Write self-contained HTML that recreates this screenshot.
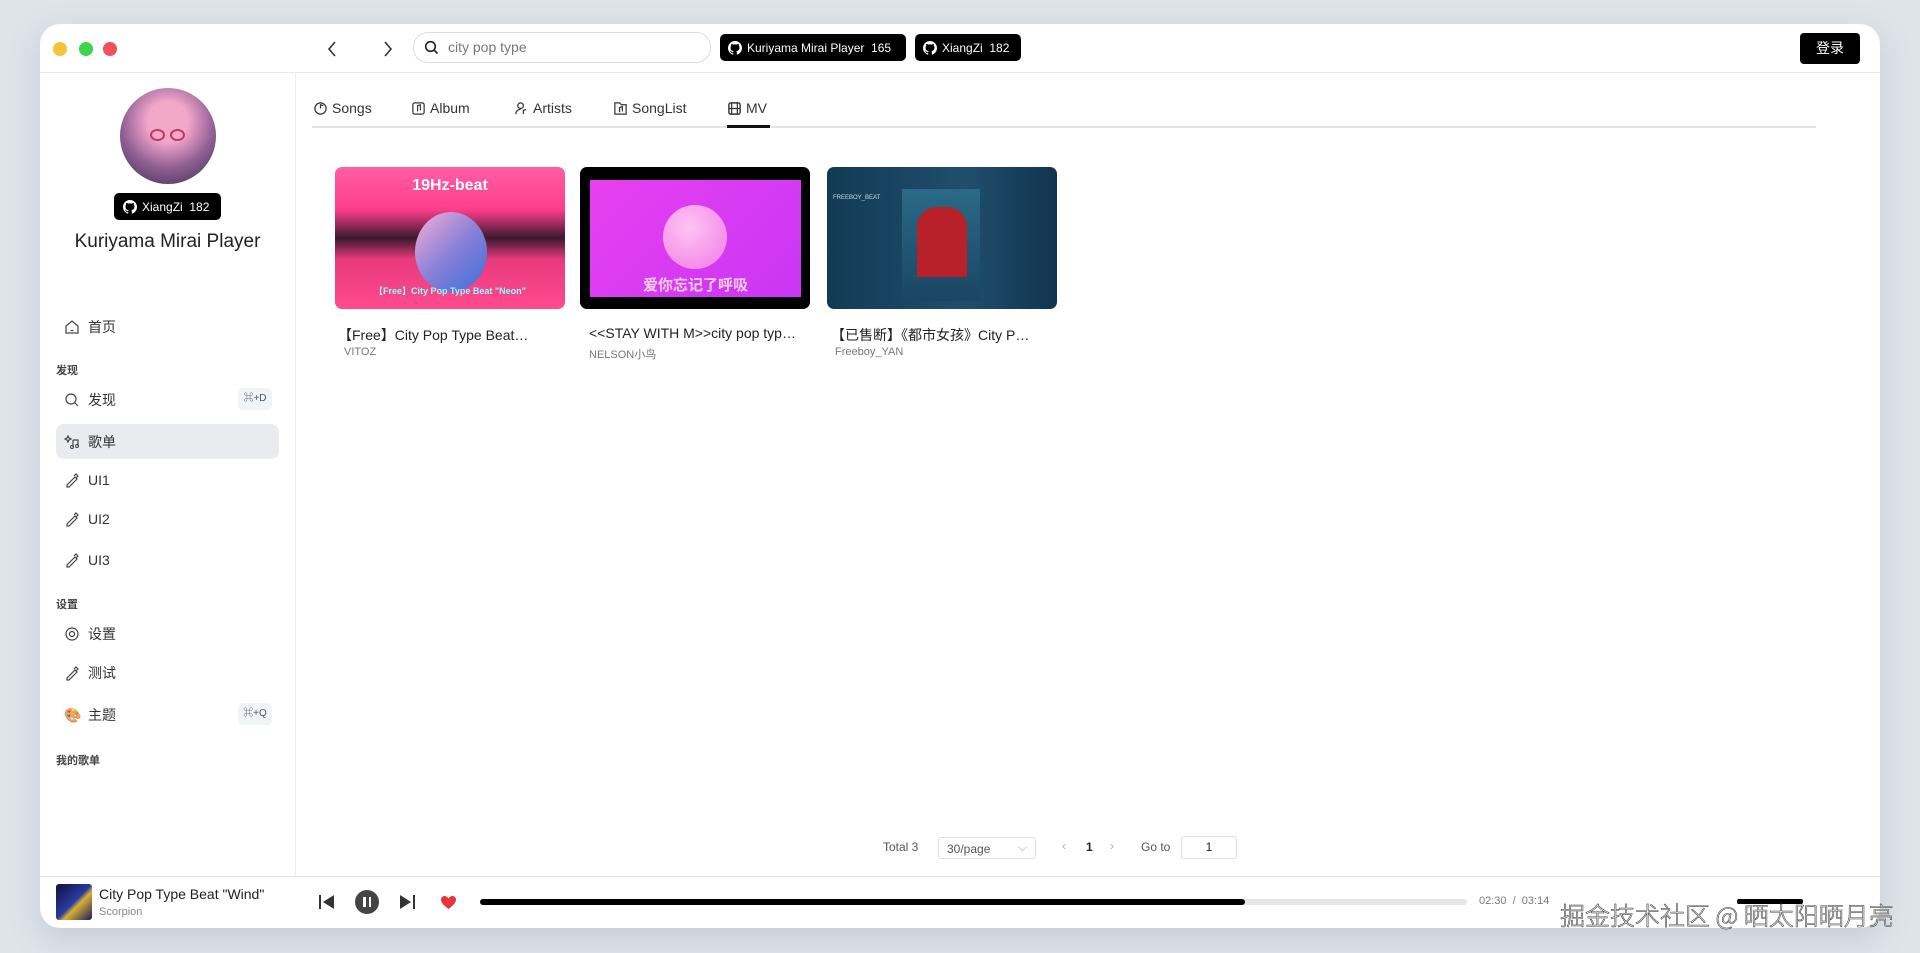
<!DOCTYPE html>
<html><head><meta charset="utf-8"><style>
*{box-sizing:border-box;margin:0;padding:0}
body{width:1920px;height:953px;background:#dfe4eb;font-family:"Liberation Sans","Noto Sans CJK SC",sans-serif;color:#222;position:relative;overflow:hidden}
.win{position:absolute;left:40px;top:24px;width:1840px;height:904px;background:#fff;border-radius:20px;box-shadow:0 10px 30px rgba(120,130,150,.25);overflow:hidden}
.abs{position:absolute}
.dot{position:absolute;top:42px;width:14px;height:14px;border-radius:50%}
.badge{position:absolute;background:#000;color:#fff;border-radius:5px;font-size:12px;display:flex;align-items:center;gap:5px;padding:0 8px;white-space:nowrap}
.menu{position:absolute;left:64px;font-size:14px;color:#333;display:flex;align-items:center;gap:8px}
.sec{position:absolute;left:56px;font-size:11px;font-weight:bold;color:#444}
.kbd{position:absolute;left:238px;width:34px;height:22px;background:#f0f3f7;border-radius:5px;font-size:10px;color:#555;text-align:center;line-height:22px}
.tab{position:absolute;top:100px;font-size:14px;color:#333;display:flex;align-items:center;gap:4px}
.card{position:absolute;top:167px;width:230px;height:142px;border-radius:7px;overflow:hidden}
.ct{position:absolute;top:325px;font-size:14px;color:#222;width:215px;white-space:nowrap;overflow:hidden}
.ca{position:absolute;top:346px;font-size:11px;color:#777}
svg{display:block}
</style></head><body>
<div class="win"></div>
<div class="dot" style="left:53px;background:#f6c23a"></div>
<div class="dot" style="left:79px;background:#3ed44c"></div>
<div class="dot" style="left:103px;background:#f2505a"></div>
<svg class="abs" style="left:325px;top:40px" width="14" height="18" viewBox="0 0 14 18"><path d="M10 2 L4 9 L10 16" fill="none" stroke="#333" stroke-width="1.6"/></svg>
<svg class="abs" style="left:381px;top:40px" width="14" height="18" viewBox="0 0 14 18"><path d="M4 2 L10 9 L4 16" fill="none" stroke="#333" stroke-width="1.6"/></svg>
<div class="abs" style="left:413px;top:32px;width:298px;height:31px;border:1px solid #ddd;border-radius:15px"></div>
<svg class="abs" style="left:424px;top:40px" width="15" height="15" viewBox="0 0 15 15"><circle cx="6.5" cy="6.5" r="4.8" fill="none" stroke="#222" stroke-width="1.6"/><path d="M10 10 L13.5 13.5" stroke="#222" stroke-width="1.6"/></svg>
<div class="abs" style="left:448px;top:39px;font-size:14px;color:#777">city pop type</div>
<div class="badge" style="left:720px;top:34px;height:27px;width:186px">
<svg width="14" height="14" viewBox="0 0 16 16"><path fill="#fff" d="M8 0C3.6 0 0 3.6 0 8c0 3.5 2.3 6.5 5.5 7.6.4.1.5-.2.5-.4v-1.4c-2.200.5-2.7-1-2.7-1-.4-.9-.9-1.2-.9-1.2-.7-.5.1-.5.1-.5.8.1 1.2.8 1.2.8.7 1.2 1.9.9 2.3.7.1-.5.3-.9.5-1.1-1.8-.2-3.600-.9-3.6-4 0-.9.3-1.6.8-2.1-.1-.2-.4-1 .1-2.1 0 0 .7-.2 2.2.8.6-.2 1.3-.3 2-.3s1.4.1 2 .3c1.5-1 2.2-.8 2.2-.8.4 1.1.2 1.9.1 2.1.5.6.8 1.3.8 2.1 0 3.1-1.9 3.7-3.6 3.9.3.3.6.8.6 1.5v2.2c0 .2.1.5.6.4C13.7 14.5 16 11.5 16 8c0-4.4-3.6-8-8-8z"/></svg>Kuriyama Mirai Player&nbsp; 165</div>
<div class="badge" style="left:915px;top:34px;height:27px;width:106px">
<svg width="14" height="14" viewBox="0 0 16 16"><path fill="#fff" d="M8 0C3.6 0 0 3.6 0 8c0 3.5 2.3 6.5 5.5 7.6.4.1.5-.2.5-.4v-1.4c-2.2.5-2.7-1-2.7-1-.4-.9-.9-1.2-.9-1.2-.7-.5.1-.5.1-.5.8.1 1.2.8 1.2.8.7 1.2 1.9.9 2.3.7.1-.5.3-.9.5-1.1-1.8-.2-3.6-.9-3.6-4 0-.9.3-1.6.8-2.1-.1-.2-.4-1 .1-2.1 0 0 .7-.2 2.2.8.6-.2 1.3-.3 2-.3s1.4.1 2 .3c1.5-1 2.2-.8 2.2-.8.4 1.1.2 1.9.1 2.1.5.6.8 1.3.8 2.1 0 3.1-1.9 3.7-3.6 3.9.3.3.6.8.6 1.5v2.2c0 .2.1.5.6.4C13.7 14.5 16 11.5 16 8c0-4.4-3.6-8-8-8z"/></svg>XiangZi&nbsp; 182</div>
<div class="abs" style="left:1800px;top:33px;width:60px;height:31px;background:#000;color:#fff;border-radius:4px;font-size:14px;text-align:center;line-height:31px">登录</div>
<div class="abs" style="left:40px;top:72px;width:1840px;height:1px;background:#e8e8e8"></div>
<div class="abs" style="left:295px;top:73px;width:1px;height:803px;background:#ececec"></div>
<div class="abs" style="left:120px;top:88px;width:96px;height:96px;border-radius:50%;background:radial-gradient(circle at 50% 35%,#f2a9c8 0 25%,#d08ab8 38%,#8c5e92 60%,#3b2c4a 100%)"></div>
<div class="abs" style="left:150px;top:129px;width:15px;height:12px;border:2px solid #c63660;border-radius:50%"></div>
<div class="abs" style="left:170px;top:129px;width:15px;height:12px;border:2px solid #c63660;border-radius:50%"></div>
<div class="badge" style="left:114px;top:193px;height:27px;width:107px;padding-left:9px">
<svg width="14" height="14" viewBox="0 0 16 16"><path fill="#fff" d="M8 0C3.6 0 0 3.6 0 8c0 3.5 2.3 6.5 5.5 7.6.4.1.5-.2.5-.4v-1.4c-2.2.5-2.7-1-2.7-1-.4-.9-.9-1.2-.9-1.2-.7-.5.1-.5.1-.5.8.1 1.2.8 1.2.8.7 1.2 1.9.9 2.3.7.1-.5.3-.9.5-1.1-1.8-.2-3.6-.9-3.6-4 0-.9.3-1.6.8-2.1-.1-.2-.4-1 .1-2.1 0 0 .7-.2 2.2.8.6-.2 1.3-.3 2-.3s1.4.1 2 .3c1.5-1 2.2-.8 2.2-.8.4 1.1.2 1.9.1 2.1.5.6.8 1.3.8 2.1 0 3.1-1.9 3.7-3.6 3.9.3.3.6.8.6 1.5v2.2c0 .2.1.5.6.4C13.7 14.5 16 11.5 16 8c0-4.4-3.6-8-8-8z"/></svg>XiangZi&nbsp; 182</div>
<div class="abs" style="left:40px;top:231px;width:255px;text-align:center;font-size:19px;color:#222">Kuriyama Mirai Player</div>

<div class="abs" style="left:56px;top:424px;width:223px;height:35px;background:#e9ebee;border-radius:8px"></div>
<div class="menu" style="top:317px"><svg width="16" height="16" viewBox="0 0 16 16"><path d="M2 7 L8 2 L14 7 V14 H2Z M6.5 11.5h3" fill="none" stroke="#444" stroke-width="1.2"/></svg>首页</div>
<div class="sec" style="top:362px">发现</div>
<div class="menu" style="top:390px"><svg width="16" height="16" viewBox="0 0 16 16"><circle cx="7" cy="7" r="5" fill="none" stroke="#444" stroke-width="1.2"/><path d="M11 11l3 3" stroke="#444" stroke-width="1.2"/></svg>发现</div>
<div class="kbd" style="top:388px">⌘+D</div>
<div class="menu" style="top:432px"><svg width="16" height="16" viewBox="0 0 16 16"><path d="M4 2l1 2 2 1-2 1-1 2-1-2-2-1 2-1z M9 6h5v6 M9 6v7" fill="none" stroke="#444" stroke-width="1.2"/><circle cx="8" cy="13" r="1.5" fill="none" stroke="#444"/><circle cx="13" cy="12" r="1.5" fill="none" stroke="#444"/></svg>歌单</div>
<div class="menu" style="top:472px"><svg width="16" height="16" viewBox="0 0 16 16"><path d="M3 13 L11 5 L13 7 L5 15 L3 15Z M10 4 L12 2 L14 4 L12 6" fill="none" stroke="#444" stroke-width="1.2"/></svg>UI1</div>
<div class="menu" style="top:511px"><svg width="16" height="16" viewBox="0 0 16 16"><path d="M3 13 L11 5 L13 7 L5 15 L3 15Z M10 4 L12 2 L14 4 L12 6" fill="none" stroke="#444" stroke-width="1.2"/></svg>UI2</div>
<div class="menu" style="top:552px"><svg width="16" height="16" viewBox="0 0 16 16"><path d="M3 13 L11 5 L13 7 L5 15 L3 15Z M10 4 L12 2 L14 4 L12 6" fill="none" stroke="#444" stroke-width="1.2"/></svg>UI3</div>
<div class="sec" style="top:596px">设置</div>
<div class="menu" style="top:624px"><svg width="16" height="16" viewBox="0 0 16 16"><circle cx="8" cy="8" r="6" fill="none" stroke="#444" stroke-width="1.2"/><circle cx="8" cy="8" r="2.5" fill="none" stroke="#444" stroke-width="1.2"/></svg>设置</div>
<div class="menu" style="top:663px"><svg width="16" height="16" viewBox="0 0 16 16"><path d="M3 13 L11 5 L13 7 L5 15 L3 15Z M10 4 L12 2 L14 4 L12 6" fill="none" stroke="#444" stroke-width="1.2"/></svg>测试</div>
<div class="menu" style="top:705px"><span style="font-size:14px;width:16px">🎨</span>主题</div>
<div class="kbd" style="top:703px">⌘+Q</div>
<div class="sec" style="top:752px">我的歌单</div>

<div class="tab" style="left:313px"><svg width="15" height="15" viewBox="0 0 16 16"><circle cx="8" cy="8" r="6" fill="none" stroke="#333" stroke-width="1.3"/><path d="M8 8v-4l3 1" fill="none" stroke="#333" stroke-width="1.3"/></svg>Songs</div>
<div class="tab" style="left:411px"><svg width="15" height="15" viewBox="0 0 16 16"><rect x="2" y="2" width="12" height="12" rx="2" fill="none" stroke="#333" stroke-width="1.3"/><path d="M7 11V5l3-1v6" fill="none" stroke="#333" stroke-width="1.2"/></svg>Album</div>
<div class="tab" style="left:514px"><svg width="15" height="15" viewBox="0 0 16 16"><circle cx="7" cy="5" r="3" fill="none" stroke="#333" stroke-width="1.3"/><path d="M2 14c0-3 2-5 5-5 M10 14v-4l3-1" fill="none" stroke="#333" stroke-width="1.3"/></svg>Artists</div>
<div class="tab" style="left:613px"><svg width="15" height="15" viewBox="0 0 16 16"><path d="M2 2h5l2 2h5v10H2z M7 12V7l3-1v5" fill="none" stroke="#333" stroke-width="1.3"/></svg>SongList</div>
<div class="tab" style="left:727px"><svg width="15" height="15" viewBox="0 0 16 16"><rect x="2" y="2" width="12" height="12" rx="2" fill="none" stroke="#333" stroke-width="1.5"/><path d="M5 2v12M11 2v12M2 8h12" stroke="#333" stroke-width="1.3"/></svg>MV</div>
<div class="abs" style="left:312px;top:126px;width:1504px;height:2px;background:#e4e4e4"></div>
<div class="abs" style="left:727px;top:125px;width:43px;height:3px;background:#111"></div>

<div class="card" style="left:335px;background:linear-gradient(180deg,#ff5fa6 0%,#ff3d8a 30%,#3a1a2e 50%,#e83a7e 65%,#ff4a8e 100%)">
<div class="abs" style="left:80px;top:45px;width:72px;height:80px;border-radius:50%;background:linear-gradient(135deg,#f7b0d8,#8a80d8,#3a6fd8)"></div>
<div class="abs" style="left:0;top:10px;width:230px;text-align:center;color:#fff;font-weight:bold;font-size:16px">19Hz-beat</div>
<div class="abs" style="left:0;top:117px;width:230px;text-align:center;color:#8ff;font-weight:bold;font-size:9px">【Free】City Pop Type Beat "Neon"</div></div>
<div class="card" style="left:580px;background:#000"><div class="abs" style="left:10px;top:13px;width:211px;height:117px;background:linear-gradient(135deg,#e840f0,#c936f5)">
<div class="abs" style="left:73px;top:25px;width:64px;height:64px;border-radius:50%;background:radial-gradient(circle at 40% 35%,#ffc4f2,#f07ae6)"></div>
<div class="abs" style="left:0;top:94px;width:211px;text-align:center;color:#ffd0f0;font-weight:bold;font-size:15px">爱你忘记了呼吸</div></div></div>
<div class="card" style="left:827px;background:linear-gradient(90deg,#133a55,#1f4e6d 60%,#11344e)">
<div class="abs" style="left:75px;top:22px;width:78px;height:112px;background:linear-gradient(180deg,#2a6a88,#1a4662)"></div>
<div class="abs" style="left:90px;top:40px;width:50px;height:70px;background:#b8202a;border-radius:20px 20px 0 0"></div>
<div class="abs" style="left:6px;top:28px;color:#cde;font-size:6px">FREEBOY_BEAT</div></div>
<div class="ct" style="left:338px">【Free】City Pop Type Beat…</div><div class="ca" style="left:344px">VITOZ</div>
<div class="ct" style="left:589px">&lt;&lt;STAY WITH M&gt;&gt;city pop typ…</div><div class="ca" style="left:589px">NELSON小鸟</div>
<div class="ct" style="left:831px">【已售断】《都市女孩》City P…</div><div class="ca" style="left:835px">Freeboy_YAN</div>

<div class="abs" style="left:883px;top:840px;font-size:12px;color:#555">Total 3</div>
<div class="abs" style="left:938px;top:837px;width:98px;height:22px;border:1px solid #dcdfe6;border-radius:3px;font-size:12px;color:#555;padding:4px 8px">30/page<span style="position:absolute;right:8px;top:2px;color:#aaa">⌵</span></div>
<div class="abs" style="left:1062px;top:839px;font-size:12px;color:#aaa">‹</div>
<div class="abs" style="left:1086px;top:840px;font-size:12px;font-weight:bold">1</div>
<div class="abs" style="left:1110px;top:839px;font-size:12px;color:#aaa">›</div>
<div class="abs" style="left:1141px;top:840px;font-size:12px;color:#555">Go to</div>
<div class="abs" style="left:1181px;top:836px;width:56px;height:23px;border:1px solid #dcdfe6;border-radius:3px;font-size:12px;text-align:center;line-height:21px">1</div>

<div class="abs" style="left:40px;top:876px;width:1840px;height:1px;background:#e6e6e6"></div>
<div class="abs" style="left:56px;top:884px;width:36px;height:36px;border-radius:3px;background:linear-gradient(135deg,#101040,#2a3aa0 50%,#d8b030 60%,#1a1a60)"></div>
<div class="abs" style="left:99px;top:886px;font-size:14px;color:#222">City Pop Type Beat "Wind"</div>
<div class="abs" style="left:99px;top:906px;font-size:11px;color:#888">Scorpion</div>
<svg class="abs" style="left:318px;top:893px" width="18" height="18" viewBox="0 0 18 18"><rect x="1" y="2" width="2" height="14" fill="#333"/><path d="M16 2 L5 9 L16 16Z" fill="#333"/></svg>
<div class="abs" style="left:355px;top:890px;width:24px;height:24px;border-radius:50%;background:#444"></div>
<div class="abs" style="left:363px;top:897px;width:2.5px;height:10px;background:#fff"></div>
<div class="abs" style="left:368.5px;top:897px;width:2.5px;height:10px;background:#fff"></div>
<svg class="abs" style="left:398px;top:893px" width="18" height="18" viewBox="0 0 18 18"><path d="M2 2 L13 9 L2 16Z" fill="#333"/><rect x="15" y="2" width="2" height="14" fill="#333"/></svg>
<svg class="abs" style="left:440px;top:895px" width="17" height="15" viewBox="0 0 17 15"><path d="M8.5 14 C3 10 1 7 1 4.5 1 2.5 2.6 1 4.5 1 6 1 7.5 2 8.5 3.5 9.5 2 11 1 12.5 1 14.4 1 16 2.5 16 4.5 16 7 14 10 8.5 14Z" fill="#e8323c"/></svg>
<div class="abs" style="left:480px;top:899px;width:987px;height:6px;border-radius:3px;background:#e6e6e8"></div>
<div class="abs" style="left:480px;top:899px;width:765px;height:6px;border-radius:3px;background:#000"></div>
<div class="abs" style="left:1479px;top:895px;font-size:11px;color:#777">02:30 &nbsp;/&nbsp; 03:14</div>
<div class="abs" style="left:1737px;top:899px;width:66px;height:5px;background:#000;border-radius:2px"></div>
<div class="abs" style="left:1560px;top:897px;font-size:25px;color:#fff;white-space:nowrap;-webkit-text-stroke:0.6px #444;font-family:'Noto Sans CJK SC',sans-serif;font-weight:300">掘金技术社区 @ 晒太阳晒月亮</div>
</body></html>
